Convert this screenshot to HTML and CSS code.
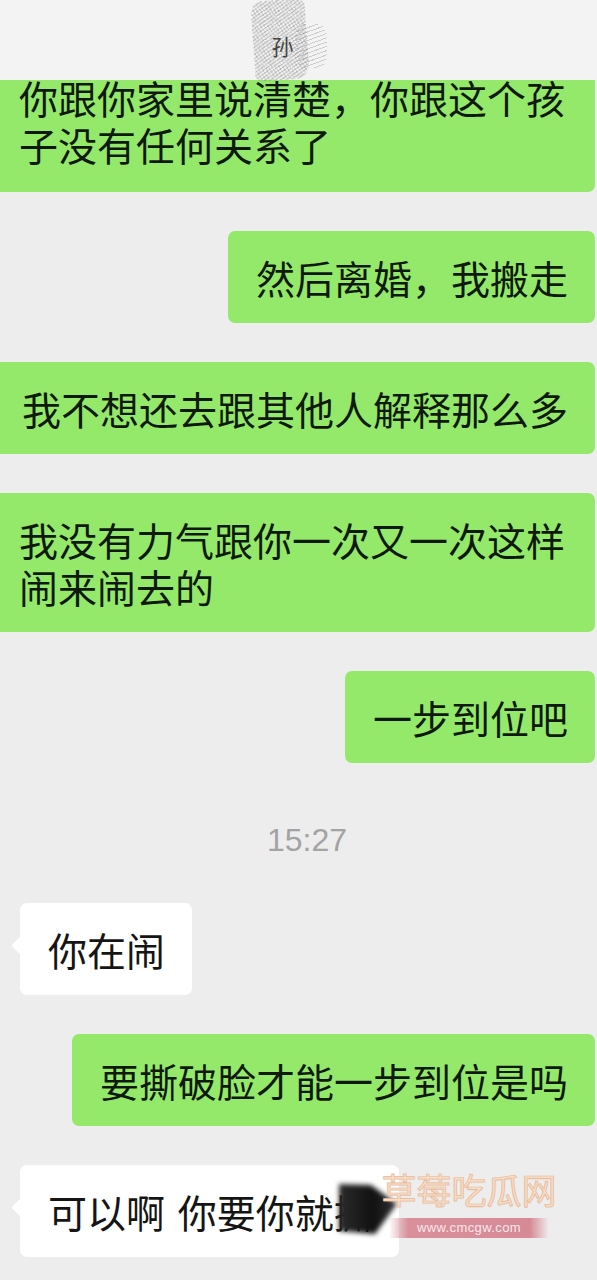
FILE: index.html
```html
<!DOCTYPE html>
<html lang="zh-CN">
<head>
    <meta charset="UTF-8">
    <title>聊天记录</title>
    <link rel="stylesheet" href="styles.css">
</head>

<body>
    <div class="screen">
        <div class="title-bar">
            <div class="title-name">孙</div>
        </div>

        <div class="chat">
            <div class="msg msg-self msg-first">你跟你家里说清楚，你跟这个孩子没有任何关系了</div>
            <div class="msg msg-self">然后离婚，我搬走</div>
            <div class="msg msg-self">我不想还去跟其他人解释那么多</div>
            <div class="msg msg-self">我没有力气跟你一次又一次这样闹来闹去的</div>
            <div class="msg msg-self">一步到位吧</div>

            <div class="time">15:27</div>

            <div class="msg msg-other">你在闹</div>
            <div class="msg msg-self">要撕破脸才能一步到位是吗</div>
            <div class="msg msg-other msg-last">可以啊 你要你就撕</div>
        </div>

        <div class="smudge">
            <div class="smudge-shape"></div>
        </div>

        <div class="watermark">
            <div class="wm-title">草莓吃瓜网</div>
            <div class="wm-url">www.cmcgw.com</div>
        </div>
    </div>
</body>
</html>
```

FILE: styles.css
```css
* {
    box-sizing: border-box;
    margin: 0;
    padding: 0;
}

body {
    background-color: #ededed;
    font-family: "Noto Sans CJK SC", "Noto Sans", sans-serif;
    color: #111;
    overflow: hidden;
}

.screen {
    position: relative;
    width: 597px;
    height: 1280px;
}

/* top bar with the scribbled-out contact name */
.title-bar {
    position: relative;
    z-index: 2;
    height: 80px;
    background-color: #f3f3f3;
    display: flex;
    justify-content: center;
}

.title-name {
    position: relative;
    width: 80px;
    height: 80px;
    margin-right: 16px;
    padding: 31px 0 0 21px;
    font-size: 22px;
    line-height: 28px;
    color: #3c3c3c;
}

.title-name::before {
    content: '';
    position: absolute;
    top: 0;
    left: 2px;
    width: 54px;
    height: 80px;
    background:
        repeating-linear-gradient(-32deg, rgba(105, 105, 105, 0.5) 0 1px, transparent 1px 3px),
        repeating-linear-gradient(58deg, rgba(130, 130, 130, 0.35) 0 1px, transparent 1px 3px);
    border-radius: 18% 12% 22% 10%;
    transform: rotate(-4deg);
    filter: blur(0.7px);
    opacity: 0.75;
}

.title-name::after {
    content: '';
    position: absolute;
    top: 24px;
    left: 44px;
    width: 32px;
    height: 44px;
    background: repeating-linear-gradient(-20deg, rgba(120, 120, 120, 0.3) 0 1px, transparent 1px 4px);
    border-radius: 30%;
    filter: blur(0.6px);
}

/* messages */
.chat {
    display: flex;
    flex-direction: column;
    gap: 39px;
    margin: 0 2px 0 -9px;
}

.msg {
    position: relative;
    max-width: 100%;
    padding: 23px 27px 22px 28px;
    font-size: 39px;
    line-height: 47px;
    border-radius: 7px;
    word-spacing: 4px;
}

.msg-self {
    align-self: flex-end;
    background-color: #95e96a;
    color: #0f1a0c;
}

.msg-first {
    margin-top: -6px;
    padding-top: 0;
    padding-bottom: 24px;
    border-radius: 0 0 7px 7px;
}

.msg-other {
    align-self: flex-start;
    margin-left: 29px;
    background-color: #fff;
    color: #151515;
}

.msg-other::before {
    content: '';
    position: absolute;
    left: -6px;
    top: 36px;
    width: 13px;
    height: 13px;
    background-color: #fff;
    border-radius: 2px;
    transform: rotate(45deg);
}

.msg-last {
    padding-right: 26px;
}

.time {
    height: 62px;
    padding: 14px 0 0 28px;
    text-align: center;
    font-family: "Liberation Sans", "Noto Sans", sans-serif;
    font-size: 32px;
    line-height: 48px;
    color: #a3a3a3;
}

/* black smear over the last word */
.smudge {
    position: absolute;
    left: 339px;
    top: 1182px;
    width: 58px;
    height: 52px;
    filter: blur(2.5px);
}

.smudge-shape {
    width: 100%;
    height: 100%;
    background: linear-gradient(90deg, #2a2a2a, #111 60%, #333);
    clip-path: polygon(0 4%, 55% 6%, 100% 42%, 62% 100%, 0 94%);
}

/* site watermark */
.watermark {
    position: absolute;
    left: 370px;
    top: 1168px;
    width: 198px;
    display: flex;
    flex-direction: column;
    align-items: center;
    gap: 8px;
}

.wm-title {
    font-size: 35px;
    line-height: 42px;
    color: #f7dcc6;
    -webkit-text-stroke: 0.7px #e8b894;
    text-shadow: 0 1px 1px rgba(220, 170, 140, 0.3);
}

.wm-url {
    width: 160px;
    height: 20px;
    background: linear-gradient(90deg, rgba(214, 128, 140, 0), #d9909a 12%, #d68a95 88%, rgba(214, 128, 140, 0));
    font-family: "Liberation Sans", sans-serif;
    font-size: 13px;
    line-height: 20px;
    text-align: center;
    color: #f8e8ea;
    letter-spacing: 0.4px;
}
```
